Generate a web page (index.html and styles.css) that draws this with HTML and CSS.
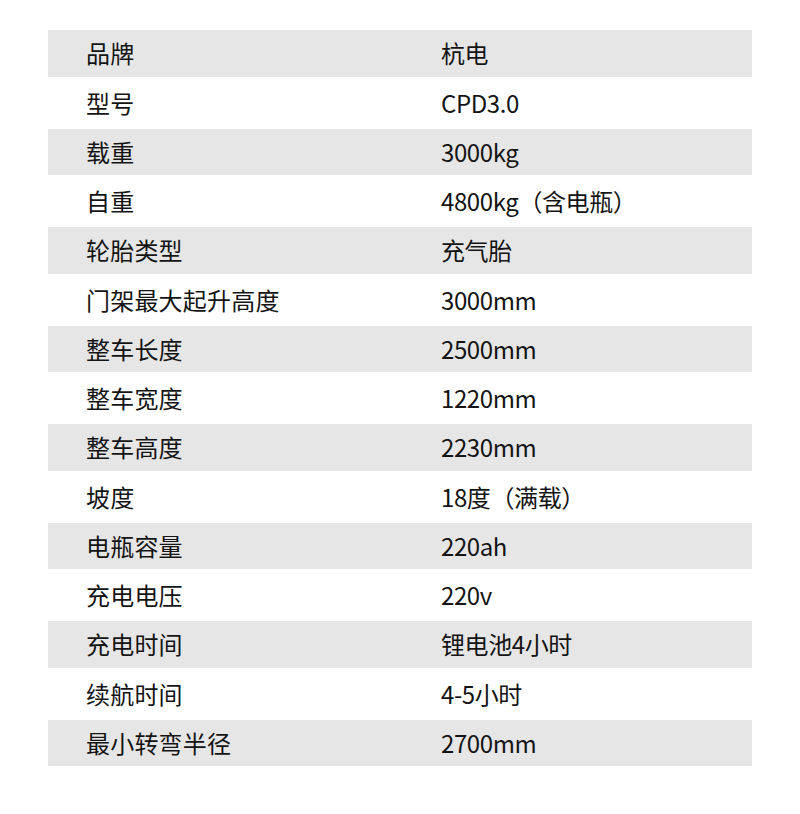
FILE: index.html
```html
<!DOCTYPE html>
<html lang="zh-CN">
<head>
<meta charset="utf-8">
<title>参数</title>
<link rel="stylesheet" href="styles.css">
</head>
<body>
<div class="spec">
  <div class="row"><span class="k">品牌</span><span class="v">杭电</span></div>
  <div class="row"><span class="k">型号</span><span class="v">CPD3.0</span></div>
  <div class="row"><span class="k">载重</span><span class="v">3000kg</span></div>
  <div class="row"><span class="k">自重</span><span class="v">4800kg（含电瓶）</span></div>
  <div class="row"><span class="k">轮胎类型</span><span class="v">充气胎</span></div>
  <div class="row"><span class="k">门架最大起升高度</span><span class="v">3000mm</span></div>
  <div class="row"><span class="k">整车长度</span><span class="v">2500mm</span></div>
  <div class="row"><span class="k">整车宽度</span><span class="v">1220mm</span></div>
  <div class="row"><span class="k">整车高度</span><span class="v">2230mm</span></div>
  <div class="row"><span class="k">坡度</span><span class="v">18度（满载）</span></div>
  <div class="row"><span class="k">电瓶容量</span><span class="v">220ah</span></div>
  <div class="row"><span class="k">充电电压</span><span class="v">220v</span></div>
  <div class="row"><span class="k">充电时间</span><span class="v">锂电池4小时</span></div>
  <div class="row"><span class="k">续航时间</span><span class="v">4-5小时</span></div>
  <div class="row"><span class="k">最小转弯半径</span><span class="v">2700mm</span></div>
</div>
</body>
</html>
```
FILE: styles.css
```css
html, body {
  margin: 0;
  padding: 0;
  background: #ffffff;
}
body {
  font-family: "Noto Sans CJK SC", "Noto Sans", sans-serif;
  font-weight: 400;
  color: #141414;
}
.spec {
  margin: 30px 48px 0 48px;
  width: 704px;
  display: flex;
  flex-direction: column;
}
.row {
  display: grid;
  grid-template-columns: 355px 1fr;
  align-items: center;
  height: 52px;
  padding-left: 38px;
  font-size: 24px;
  line-height: 1;
}
.row:nth-child(odd) {
  background: #e6e6e6;
  height: 46.5px;
}
.k, .v {
  display: block;
  white-space: nowrap;
}
.k {
  letter-spacing: 0.2px;
}
.v {
  letter-spacing: -0.4px;
}
```
